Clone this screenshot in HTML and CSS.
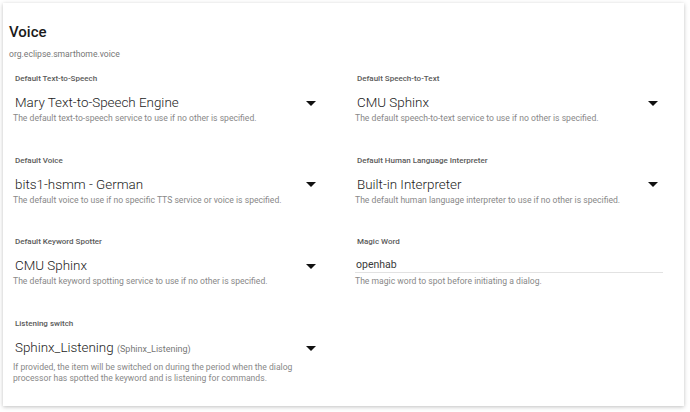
FILE: index.html
```html
<!DOCTYPE html>
<html>
<head>
<meta charset="utf-8">
<title>Voice</title>
<link rel="stylesheet" href="styles.css">
</head>
<body>

<div class="card">
	<h2 class="card-title">Voice</h2>
	<div class="card-sub">org.eclipse.smarthome.voice</div>

	<div class="fields">
		<div class="field">
			<label class="field-label">Default Text-to-Speech</label>
			<div class="select">
				<span class="select-value">Mary Text-to-Speech Engine</span>
				<svg class="select-arrow" width="10" height="5" viewBox="0 0 10 5"><path d="M0 0h10L5 5z"/></svg>
			</div>
			<div class="field-hint">The default text-to-speech service to use if no other is specified.</div>
		</div>
		<div class="field">
			<label class="field-label">Default Speech-to-Text</label>
			<div class="select">
				<span class="select-value">CMU Sphinx</span>
				<svg class="select-arrow" width="10" height="5" viewBox="0 0 10 5"><path d="M0 0h10L5 5z"/></svg>
			</div>
			<div class="field-hint">The default speech-to-text service to use if no other is specified.</div>
		</div>

		<div class="field">
			<label class="field-label">Default Voice</label>
			<div class="select">
				<span class="select-value">bits1-hsmm - German</span>
				<svg class="select-arrow" width="10" height="5" viewBox="0 0 10 5"><path d="M0 0h10L5 5z"/></svg>
			</div>
			<div class="field-hint">The default voice to use if no specific TTS service or voice is specified.</div>
		</div>
		<div class="field">
			<label class="field-label">Default Human Language Interpreter</label>
			<div class="select">
				<span class="select-value">Built-in Interpreter</span>
				<svg class="select-arrow" width="10" height="5" viewBox="0 0 10 5"><path d="M0 0h10L5 5z"/></svg>
			</div>
			<div class="field-hint">The default human language interpreter to use if no other is specified.</div>
		</div>

		<div class="field">
			<label class="field-label">Default Keyword Spotter</label>
			<div class="select">
				<span class="select-value">CMU Sphinx</span>
				<svg class="select-arrow" width="10" height="5" viewBox="0 0 10 5"><path d="M0 0h10L5 5z"/></svg>
			</div>
			<div class="field-hint">The default keyword spotting service to use if no other is specified.</div>
		</div>
		<div class="field">
			<label class="field-label">Magic Word</label>
			<input class="text-input" type="text" value="openhab">
			<div class="field-hint hint-input">The magic word to spot before initiating a dialog.</div>
		</div>

		<div class="field">
			<label class="field-label">Listening switch</label>
			<div class="select">
				<span class="select-value">Sphinx_Listening <small class="select-item">(Sphinx_Listening)</small></span>
				<svg class="select-arrow" width="10" height="5" viewBox="0 0 10 5"><path d="M0 0h10L5 5z"/></svg>
			</div>
			<div class="field-hint hint-long">If provided, the item will be switched on during the period when the dialog processor has spotted the keyword and is listening for commands.</div>
		</div>
	</div>
</div>

</body>
</html>
```

FILE: styles.css
```css
html, body {
margin: 0;
padding: 0;
background: #fff;
font-family: Roboto, "Liberation Sans", Arial, sans-serif;
}

.card {
margin: 3px 6px 6px 3px;
padding: 19px 6px 21px 6px;
background: #fff;
box-shadow: 0 1px 4px rgba(0,0,0,0.25);
}
.card-title {
margin: 0;
font-size: 15px;
line-height: 20px;
font-weight: 500;
color: #1a1a1a;
}
.card-sub {
margin-top: 5px;
font-size: 8.6px;
line-height: 14px;
color: #777;
}

.fields {
display: grid;
grid-template-columns: 342px 1fr;
row-gap: 30.7px;
margin-top: 12px;
}
.field {
padding-left: 6px;
}
.field-label {
display: block;
margin-bottom: 9px;
font-size: 8px;
line-height: 12px;
font-weight: 500;
color: #5a5a5a;
}

.select {
display: flex;
align-items: center;
justify-content: space-between;
width: 301px;
height: 18px;
}
.select-value {
font-size: 13.4px;
line-height: 18px;
font-weight: 300;
color: #222;
}
.select-item {
font-size: 9px;
font-weight: 400;
color: #777;
}
.select-arrow {
fill: #111;
}

.text-input {
display: block;
box-sizing: border-box;
width: 308px;
margin: -1px 0 0 -2px;
padding: 0 0 0 1px;
height: 17px;
border: 0;
border-bottom: 1px solid #e2e2e2;
outline: none;
font-family: inherit;
font-size: 10.5px;
line-height: 16px;
color: #3a3a3a;
background: transparent;
}

.field-hint {
margin-left: -2px;
max-width: 303px;
font-size: 8.6px;
line-height: 12px;
color: #888;
}
.hint-input {
margin-top: 2px;
}
.hint-long {
margin-top: 4.5px;
line-height: 11.5px;
}
```
